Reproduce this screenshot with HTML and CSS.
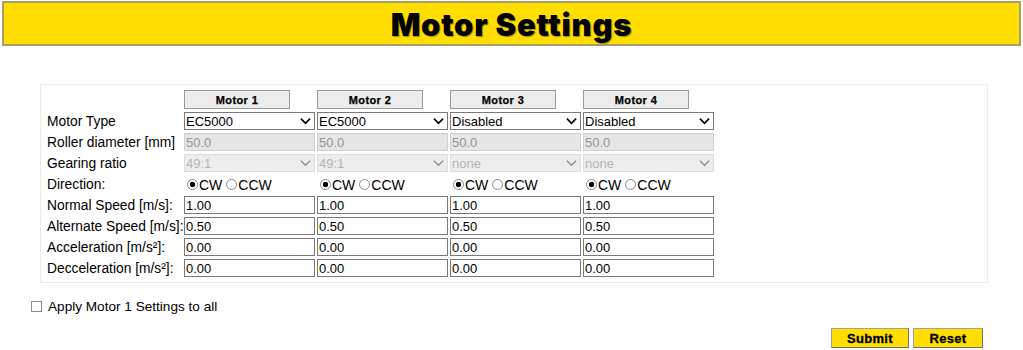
FILE: index.html
```html
<!DOCTYPE html>
<html lang="en">
<head>
<meta charset="utf-8">
<title>Motor Settings</title>
<link rel="stylesheet" href="styles.css">
</head>
<body>
<header class="banner"><h1 class="banner-title">Motor Settings</h1></header>

<form class="settings">
  <div class="panel">
    <div class="grid">
      <div class="label"></div>
      <div class="cell"><button type="button" class="motor-btn">Motor 1</button></div>
      <div class="cell"><button type="button" class="motor-btn">Motor 2</button></div>
      <div class="cell"><button type="button" class="motor-btn">Motor 3</button></div>
      <div class="cell"><button type="button" class="motor-btn">Motor 4</button></div>

      <div class="label">Motor Type</div>
      <div class="cell sel"><select class="field"><option>EC5000</option></select><svg class="chev" viewBox="0 0 12 8"><path d="M1 1.5 L6 6.5 L11 1.5" /></svg></div>
      <div class="cell sel"><select class="field"><option>EC5000</option></select><svg class="chev" viewBox="0 0 12 8"><path d="M1 1.5 L6 6.5 L11 1.5" /></svg></div>
      <div class="cell sel"><select class="field"><option>Disabled</option></select><svg class="chev" viewBox="0 0 12 8"><path d="M1 1.5 L6 6.5 L11 1.5" /></svg></div>
      <div class="cell sel"><select class="field"><option>Disabled</option></select><svg class="chev" viewBox="0 0 12 8"><path d="M1 1.5 L6 6.5 L11 1.5" /></svg></div>

      <div class="label">Roller diameter [mm]</div>
      <div class="cell"><input class="field" type="text" value="50.0" disabled></div>
      <div class="cell"><input class="field" type="text" value="50.0" disabled></div>
      <div class="cell"><input class="field" type="text" value="50.0" disabled></div>
      <div class="cell"><input class="field" type="text" value="50.0" disabled></div>

      <div class="label">Gearing ratio</div>
      <div class="cell sel dis"><select class="field" disabled><option>49:1</option></select><svg class="chev" viewBox="0 0 12 8"><path d="M1 1.5 L6 6.5 L11 1.5" /></svg></div>
      <div class="cell sel dis"><select class="field" disabled><option>49:1</option></select><svg class="chev" viewBox="0 0 12 8"><path d="M1 1.5 L6 6.5 L11 1.5" /></svg></div>
      <div class="cell sel dis"><select class="field" disabled><option>none</option></select><svg class="chev" viewBox="0 0 12 8"><path d="M1 1.5 L6 6.5 L11 1.5" /></svg></div>
      <div class="cell sel dis"><select class="field" disabled><option>none</option></select><svg class="chev" viewBox="0 0 12 8"><path d="M1 1.5 L6 6.5 L11 1.5" /></svg></div>

      <div class="label">Direction:</div>
      <div class="cell radios"><label><input type="radio" name="d1" checked>CW</label><label><input type="radio" name="d1">CCW</label></div>
      <div class="cell radios"><label><input type="radio" name="d2" checked>CW</label><label><input type="radio" name="d2">CCW</label></div>
      <div class="cell radios"><label><input type="radio" name="d3" checked>CW</label><label><input type="radio" name="d3">CCW</label></div>
      <div class="cell radios"><label><input type="radio" name="d4" checked>CW</label><label><input type="radio" name="d4">CCW</label></div>

      <div class="label">Normal Speed [m/s]:</div>
      <div class="cell"><input class="field" type="text" value="1.00"></div>
      <div class="cell"><input class="field" type="text" value="1.00"></div>
      <div class="cell"><input class="field" type="text" value="1.00"></div>
      <div class="cell"><input class="field" type="text" value="1.00"></div>

      <div class="label">Alternate Speed [m/s]:</div>
      <div class="cell"><input class="field" type="text" value="0.50"></div>
      <div class="cell"><input class="field" type="text" value="0.50"></div>
      <div class="cell"><input class="field" type="text" value="0.50"></div>
      <div class="cell"><input class="field" type="text" value="0.50"></div>

      <div class="label">Acceleration [m/s²]:</div>
      <div class="cell"><input class="field" type="text" value="0.00"></div>
      <div class="cell"><input class="field" type="text" value="0.00"></div>
      <div class="cell"><input class="field" type="text" value="0.00"></div>
      <div class="cell"><input class="field" type="text" value="0.00"></div>

      <div class="label">Decceleration [m/s²]:</div>
      <div class="cell"><input class="field" type="text" value="0.00"></div>
      <div class="cell"><input class="field" type="text" value="0.00"></div>
      <div class="cell"><input class="field" type="text" value="0.00"></div>
      <div class="cell"><input class="field" type="text" value="0.00"></div>
    </div>
  </div>

  <label class="apply"><input type="checkbox" class="check">Apply Motor 1 Settings to all</label>

  <div class="actions">
    <button type="submit" class="action submit">Submit</button>
    <button type="reset" class="action reset">Reset</button>
  </div>
</form>
</body>
</html>
```

FILE: styles.css
```css
html, body {
  margin: 0;
  padding: 0;
  background: #ffffff;
  font-family: "Liberation Sans", Arial, sans-serif;
  color: #000;
}

.banner {
  margin: 1px 2px 0 2px;
  height: 41px;
  background: #ffde00;
  border: 2px solid #a89e6a;
  display: flex;
  align-items: center;
  justify-content: center;
}

.banner-title {
  margin: 2px 0 0 0;
  font-family: "Inter", "Lato", sans-serif;
  font-weight: 900;
  font-size: 31px;
  letter-spacing: 0.8px;
  color: #000;
  text-shadow: 1px 1px 1px rgba(0,0,0,0.35);
}

.settings {
  display: block;
}

.panel {
  margin: 38px 0 0 40px;
  width: 940px;
  border: 1px solid #ececec;
  padding: 5px 0 5px 6px;
}

.grid {
  display: grid;
  grid-template-columns: 135px repeat(4, 131px);
  grid-template-rows: 19px repeat(8, 18px);
  column-gap: 2px;
  row-gap: 3px;
}

.label {
  font-size: 13.8px;
  line-height: 18px;
  padding-top: 1px;
  white-space: nowrap;
}

.cell {
  position: relative;
  display: flex;
  align-items: stretch;
}

.motor-btn {
  width: 106px;
  height: 19px;
  margin: 0;
  padding: 0;
  background: #ececec;
  border: 1px solid #9a9a9a;
  font-family: "Liberation Sans", Arial, sans-serif;
  font-weight: 700;
  font-size: 11px;
  letter-spacing: 0.4px;
  -webkit-text-stroke: 0.25px #000;
  color: #000;
}

.field {
  box-sizing: border-box;
  width: 131px;
  height: 18px;
  margin: 0;
  padding: 0 1px;
  border: 1px solid #7a7a7a;
  border-radius: 0;
  background: #ffffff;
  font-family: "Liberation Sans", Arial, sans-serif;
  font-size: 13px;
  color: #000;
  outline: none;
}

select.field {
  appearance: none;
  -webkit-appearance: none;
  padding: 0 1px;
}

.field:disabled {
  background: #e6e6e6;
  border-color: #d0d0d0;
  color: #959595;
}

.chev {
  position: absolute;
  right: 4px;
  top: 5px;
  width: 11px;
  height: 8px;
  pointer-events: none;
}

.chev path {
  fill: none;
  stroke: #000;
  stroke-width: 1.8;
}

.dis .chev path {
  stroke: #8a8a8a;
  stroke-width: 1.3;
}

.radios {
  align-items: center;
  font-size: 14px;
  padding-left: 3px;
  padding-top: 1px;
  gap: 0;
}

.radios label {
  display: flex;
  align-items: center;
}

.radios input[type="radio"] {
  appearance: none;
  -webkit-appearance: none;
  width: 11px;
  height: 11px;
  margin: 0 1px 0 0;
  border: 1px solid #8a8a8a;
  border-radius: 50%;
  background: #fff;
}

.radios input[type="radio"]:checked {
  background: radial-gradient(circle, #000 0, #000 2.5px, #fff 3px);
}

.radios label + label input[type="radio"] {
  margin-left: 4px;
}

.apply {
  margin: 15px 0 0 31px;
  display: flex;
  align-items: center;
  font-size: 13.6px;
  height: 16px;
}

.check {
  appearance: none;
  -webkit-appearance: none;
  width: 11px;
  height: 11px;
  margin: 0 6px 0 0;
  border: 1px solid #8a8a8a;
  background: #fff;
}

.actions {
  display: flex;
  justify-content: flex-end;
  gap: 4px;
  margin: 14px 40px 0 0;
}

.action {
  height: 20px;
  padding: 0;
  margin: 0;
  background: #ffde00;
  border: 1px solid #a0a0a0;
  border-right-color: #707070;
  border-bottom-color: #707070;
  font-family: "Liberation Sans", Arial, sans-serif;
  font-weight: 700;
  font-size: 13px;
  letter-spacing: 0.3px;
  -webkit-text-stroke: 0.3px #000;
  color: #000;
}

.submit { width: 78px; }
.reset { width: 70px; }
```
